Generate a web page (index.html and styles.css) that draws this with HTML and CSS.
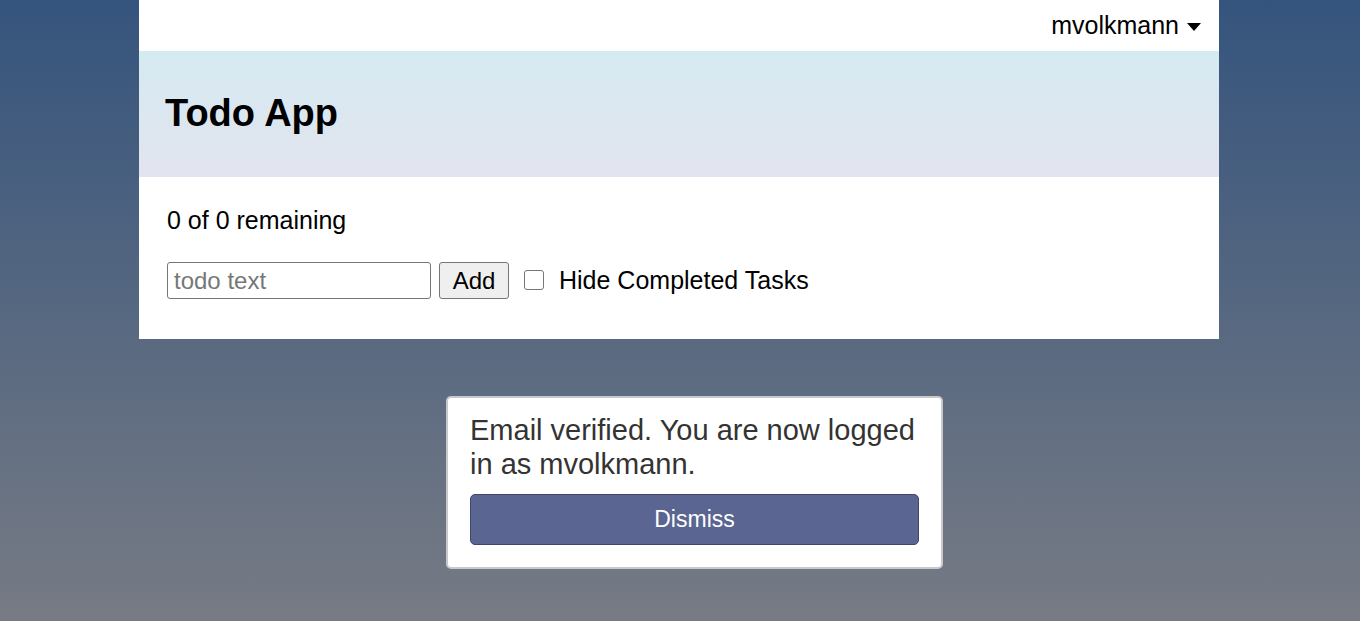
FILE: index.html
```html
<!DOCTYPE html>
<html>
<head>
<meta charset="utf-8">
<link rel="stylesheet" href="styles.css">
</head>
<body>
<div class="page">
  <div class="app">
    <div class="topbar">
      <span class="user">mvolkmann</span>
      <svg class="caret" width="14" height="8" viewBox="0 0 14 8"><path d="M0 0H14L7 8Z" fill="#000"/></svg>
    </div>
    <header class="header"><h1>Todo App</h1></header>
    <main class="body">
      <div class="status">0 of 0 remaining</div>
      <form class="row">
        <input class="text" type="text" placeholder="todo text">
        <button class="add" type="button">Add</button>
        <label class="hide"><span class="box"></span>Hide Completed Tasks</label>
      </form>
    </main>
  </div>
  <div class="toast">
    <p>Email verified. You are now logged in as mvolkmann.</p>
    <button class="dismiss" type="button">Dismiss</button>
  </div>
</div>
</body>
</html>
```
FILE: styles.css
```css
html, body { margin: 0; padding: 0; }
body {
  font-family: "Liberation Sans", Arial, sans-serif;
  background: linear-gradient(#35547d, #777b84);
  height: 621px;
  overflow: hidden;
}
.page {
  display: flex;
  flex-direction: column;
  align-items: center;
  padding-right: 2px;
}
.app {
  width: 1080px;
  background: #fff;
}
.topbar {
  height: 51px;
  display: flex;
  align-items: center;
  justify-content: flex-end;
  padding-right: 18px;
  gap: 8px;
  box-sizing: border-box;
}
.user { font-size: 25px; color: #000; }
.caret { margin-top: 2px; }
.header {
  height: 126px;
  background: linear-gradient(#d5eaf1, #e2e4ef);
  display: flex;
  align-items: center;
  padding-left: 26px;
  box-sizing: border-box;
}
.header h1 {
  margin: 0 0 1px;
  font-size: 38px;
  font-weight: bold;
}
.body {
  height: 162px;
  box-sizing: border-box;
  padding: 29px 28px 0;
}
.status { font-size: 25px; line-height: 28px; }
.row {
  margin: 28px 0 0;
  display: flex;
  align-items: center;
}
.text {
  width: 264px;
  height: 37px;
  box-sizing: border-box;
  border: 1px solid #767676;
  border-radius: 3px;
  font-family: inherit;
  font-size: 24px;
  padding: 0 6px;
  margin: 0;
}
.text::placeholder { color: #777; }
.add {
  margin-left: 8px;
  width: 70px;
  height: 37px;
  box-sizing: border-box;
  border: 1px solid #767676;
  border-radius: 3px;
  background: #efefef;
  font-family: inherit;
  font-size: 24px;
  color: #000;
  padding: 0;
}
.hide {
  display: flex;
  align-items: center;
  font-size: 25px;
  margin-left: 15px;
}
.box {
  width: 20px;
  height: 20px;
  box-sizing: border-box;
  border: 1px solid #767676;
  border-radius: 3px;
  background: #fff;
  margin-right: 15px;
  margin-bottom: 2px;
}
.toast {
  align-self: flex-start;
  margin-left: 446px;
  margin-top: 57px;
  width: 497px;
  height: 173px;
  box-sizing: border-box;
  background: #fff;
  border: 2px solid #c9c9c9;
  border-radius: 5px;
  padding: 15px 22px 0;
}
.toast p {
  margin: 0;
  font-size: 29px;
  line-height: 34px;
  color: #333;
}
.dismiss {
  margin-top: 13px;
  width: 449px;
  height: 51px;
  box-sizing: border-box;
  background: #5a6591;
  border: 1px solid #3e486c;
  border-radius: 5px;
  color: #fff;
  font-family: inherit;
  font-size: 23px;
  padding: 0;
}
```
